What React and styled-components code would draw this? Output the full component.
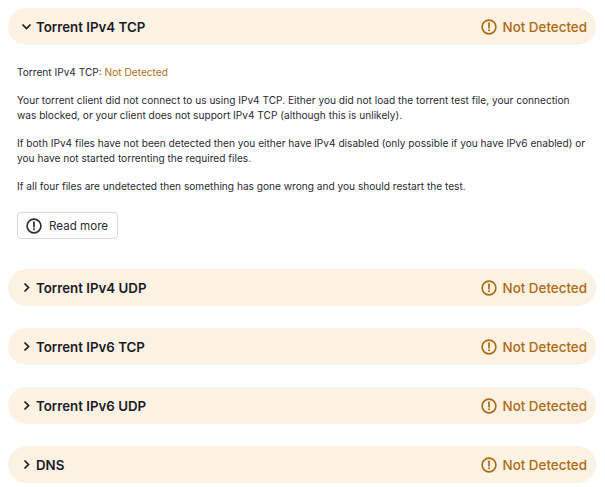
import * as React from 'react';
import styled, {createGlobalStyle} from 'styled-components';

const GlobalStyle = createGlobalStyle`
  html, body {
    margin: 0;
    padding: 0;
    background: #fff;
  }
`;

const Page = styled.div`
  width: 605px;
  height: 487px;
  box-sizing: border-box;
  padding: 8px 9px 0 8px;
  font-family: Inter, "Liberation Sans", sans-serif;
  color: #2b2b33;
  overflow: hidden;
`;

const Section = styled.section`
  margin-bottom: 22px;
`;

const Header = styled.div`
  height: 37px;
  border-radius: 18.5px;
  background: #fcf2e3;
  display: flex;
  align-items: center;
  padding: 0 9px 0 13px;
`;

const Chevron = styled.svg`
  width: 11px;
  height: 11px;
  flex-shrink: 0;
  margin-right: 4px;
`;

const Title = styled.h3`
  margin: 0;
  font-size: 13.3px;
  font-weight: 600;
  color: #1b1b26;
  flex: 1;
`;

const Status = styled.div`
  display: flex;
  align-items: center;
  gap: 6px;
  font-size: 13.4px;
  font-weight: 500;
  color: #ad6a12;
`;

const Body = styled.div`
  padding: 20px 8px 8px 9px;
  font-size: 10.15px;
  line-height: 15px;
`;

const Para = styled.p`
  margin: 0 0 13px;
`;

const Warn = styled.span`
  color: #b36f16;
`;

const ReadMore = styled.button`
  display: flex;
  align-items: center;
  gap: 7px;
  height: 27px;
  width: 101px;
  margin-top: 18px;
  padding: 0 8px;
  box-sizing: border-box;
  border: 1px solid #d9d9dc;
  border-radius: 4px;
  background: #fff;
  font-family: inherit;
  font-size: 11.6px;
  color: #2b2b33;
`;

const AlertIcon = ({size = 16, color = '#ad6a12'}) => (
  <svg width={size} height={size} viewBox="0 0 16 16" fill="none">
    <circle cx="8" cy="8" r="6.9" stroke={color} strokeWidth="1.6"/>
    <path d="M8 4.2v4.6" stroke={color} strokeWidth="1.7" strokeLinecap="round"/>
    <circle cx="8" cy="11.3" r="1" fill={color}/>
  </svg>
);

const Row = ({title, open, children}) => (
  <Section>
    <Header>
      <Chevron viewBox="0 0 11 11" fill="none">
        <path
          d={open ? 'M1.5 3.5 L5.5 7.5 L9.5 3.5' : 'M3.5 1.5 L7.5 5.5 L3.5 9.5'}
          stroke="#1b1b26"
          strokeWidth="1.7"
        />
      </Chevron>
      <Title>{title}</Title>
      <Status>
        <AlertIcon/>
        Not Detected
      </Status>
    </Header>
    {open && children}
  </Section>
);

const App = () => (
  <Page>
    <GlobalStyle/>
    <Row title="Torrent IPv4 TCP" open>
      <Body>
        <Para>Torrent IPv4 TCP: <Warn>Not Detected</Warn></Para>
        <Para>
          Your torrent client did not connect to us using IPv4 TCP. Either you did not load the torrent test file, your connection
          was blocked, or your client does not support IPv4 TCP (although this is unlikely).
        </Para>
        <Para>
          If both IPv4 files have not been detected then you either have IPv4 disabled (only possible if you have IPv6 enabled) or
          you have not started torrenting the required files.
        </Para>
        <Para>If all four files are undetected then something has gone wrong and you should restart the test.</Para>
        <ReadMore>
          <AlertIcon color="#2b2b33"/>
          Read more
        </ReadMore>
      </Body>
    </Row>
    <Row title="Torrent IPv4 UDP"/>
    <Row title="Torrent IPv6 TCP"/>
    <Row title="Torrent IPv6 UDP"/>
    <Row title="DNS"/>
  </Page>
);

export default App;
